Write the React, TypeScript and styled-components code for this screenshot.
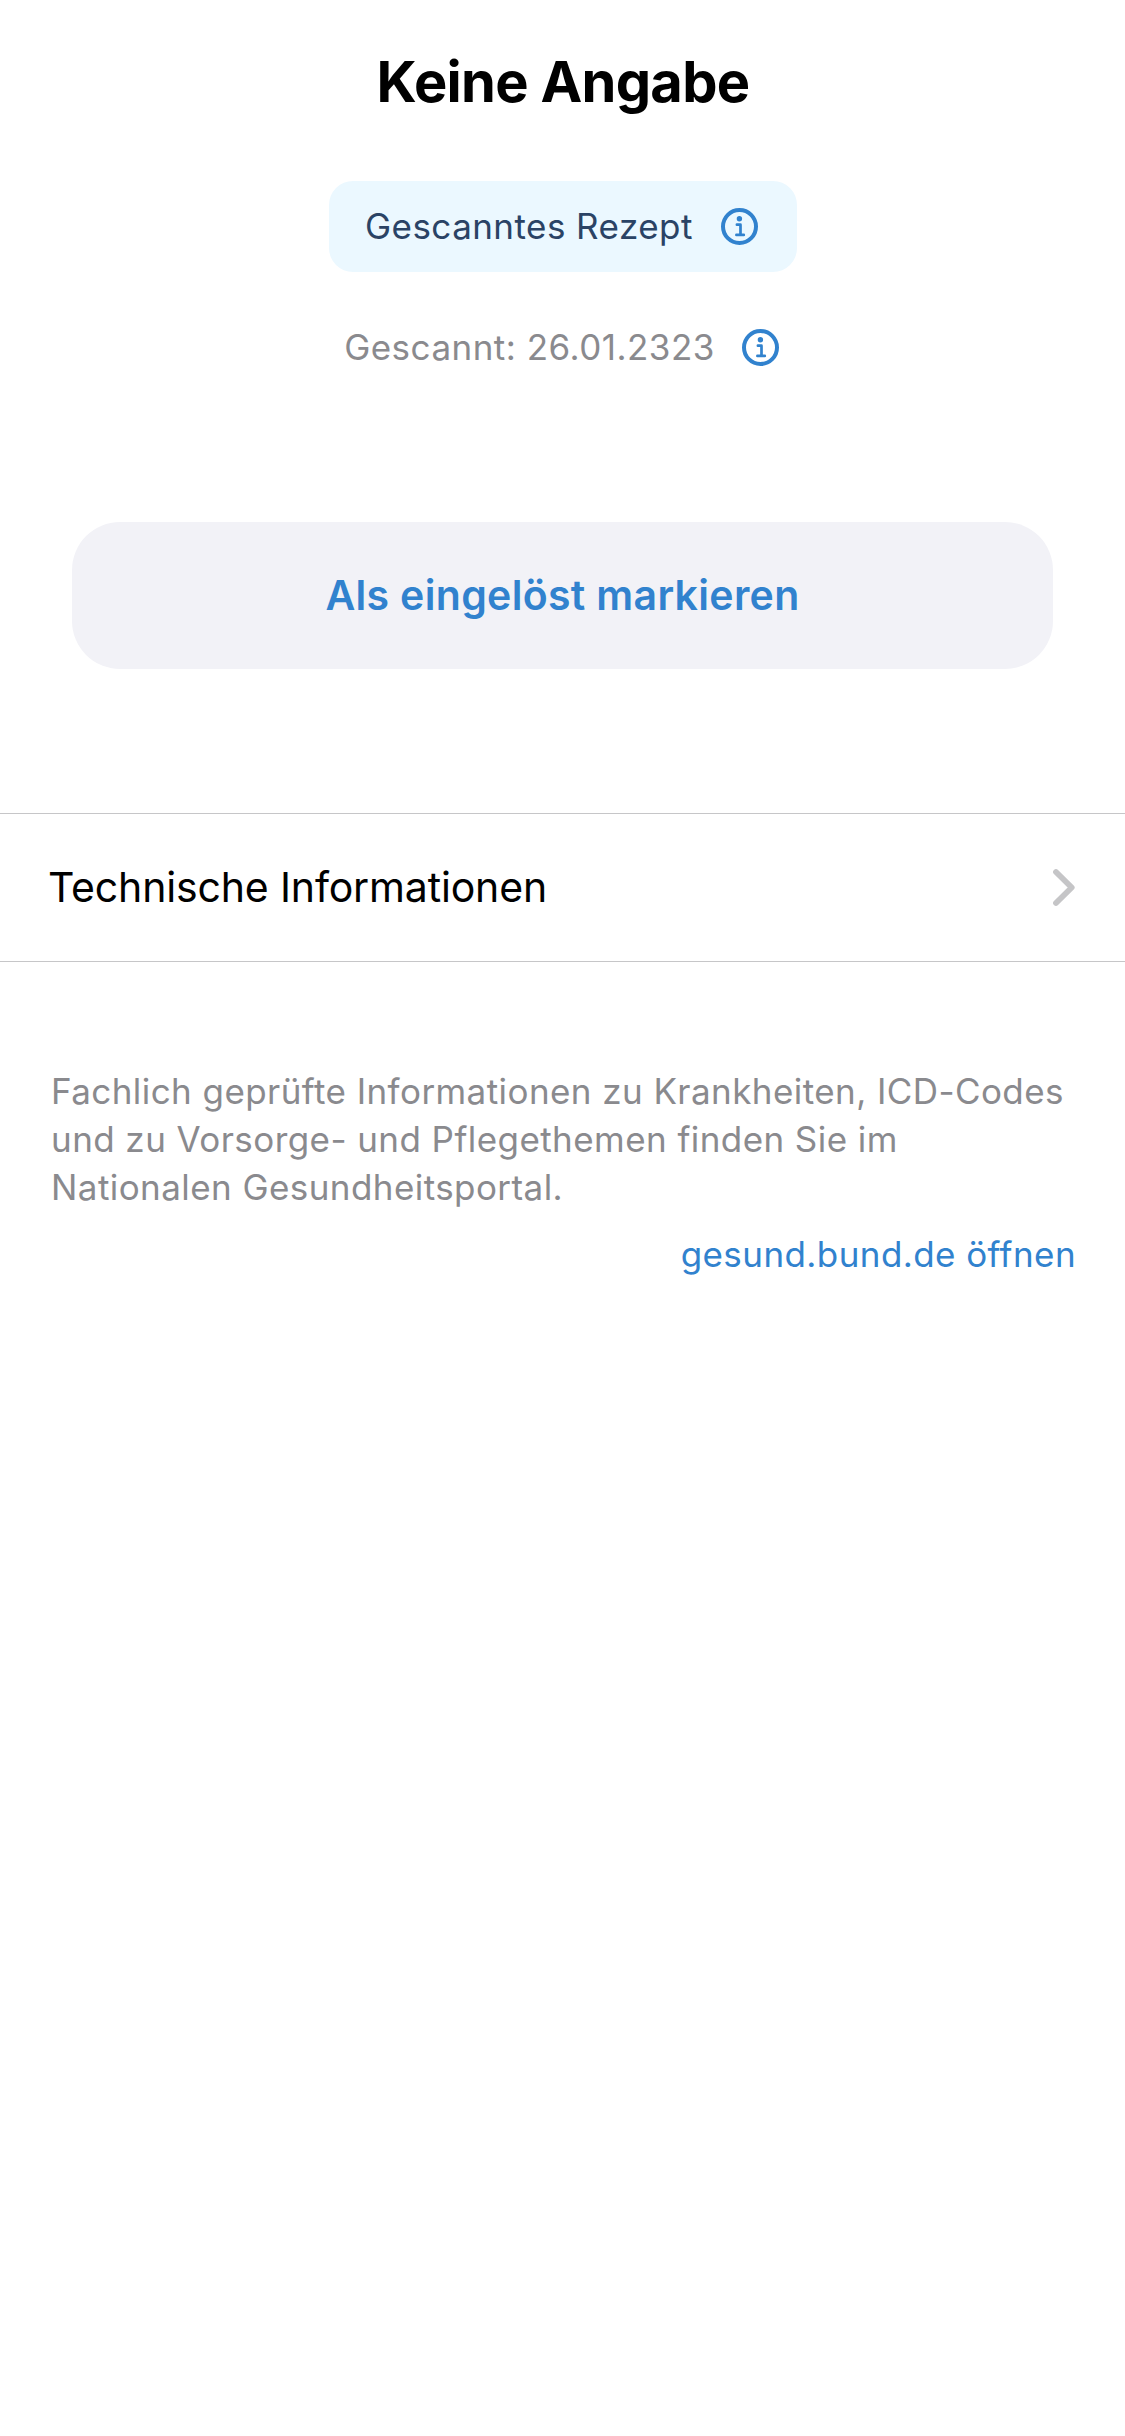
import React from 'react';
import styled, { createGlobalStyle } from 'styled-components';

const color = {
  background: '#ffffff',
  label: '#000000',
  secondary: '#8a8a8e',
  primary: '#3182ce',
  chipBackground: '#ebf8ff',
  chipText: '#2a4365',
  button: '#f2f2f7',
  separator: '#c6c6c8',
  chevron: '#c5c5c7',
};

const GlobalStyle = createGlobalStyle`
  body {
    margin: 0;
    background: ${color.background};
    font-family: Inter, 'Liberation Sans', sans-serif;
  }
  *, *::before, *::after { box-sizing: border-box; }
`;

const Screen = styled.main`
  display: flex;
  flex-direction: column;
  min-height: 2436px;
  background: ${color.background};
`;

const Header = styled.header`
  display: flex;
  flex-direction: column;
  align-items: center;
  padding: 48px 0 0 1px;
`;

const Title = styled.h1`
  margin: 0 0 65px;
  font-size: 56px;
  font-weight: 700;
  line-height: 68px;
  letter-spacing: -0.7px;
  color: ${color.label};
`;

const Chip = styled.button`
  display: flex;
  justify-content: space-between;
  align-items: flex-start;
  width: 468px;
  height: 91px;
  margin: 0 0 54px;
  padding: 24px 36px;
  border: 0;
  border-radius: 24px;
  background: ${color.chipBackground};
`;

const MetaRow = styled.div`
  display: flex;
  align-items: flex-start;
  gap: 24px;
`;

const Caption = styled.span<{ $color: string; $tracking: number }>`
  font-family: Inter, 'Liberation Sans', sans-serif;
  font-size: 35px;
  line-height: 42px;
  white-space: nowrap;
  letter-spacing: ${(p) => p.$tracking}px;
  color: ${(p) => p.$color};
`;

const Icon = styled.svg`
  display: block;
  flex: none;
  fill: none;
  stroke-linecap: round;
  stroke-linejoin: round;
`;

const PrimaryAction = styled.button`
  display: flex;
  justify-content: center;
  align-items: flex-start;
  height: 147px;
  margin: 153px 72px 0;
  padding: 48px 0 0;
  border: 0;
  border-radius: 48px;
  background: ${color.button};
  color: ${color.primary};
  font-family: inherit;
  font-size: 41px;
  font-weight: 600;
  line-height: 50px;
  letter-spacing: 0.32px;
`;

const ListRow = styled.a`
  display: flex;
  justify-content: space-between;
  height: 149px;
  margin-top: 144px;
  padding: 48px 49px 0 48px;
  border-top: 1px solid ${color.separator};
  border-bottom: 1px solid ${color.separator};
  color: ${color.label};
  font-size: 41px;
  line-height: 50px;
  letter-spacing: -0.16px;
`;

const Footer = styled.footer`
  display: flex;
  flex-direction: column;
  gap: 22px;
  padding: 105px 49px 0 51px;
`;

const Note = styled.p`
  margin: 0;
  font-size: 35px;
  line-height: 48px;
  letter-spacing: 0.43px;
  color: ${color.secondary};
`;

const PortalLink = styled.a`
  align-self: flex-end;
  font-size: 35px;
  line-height: 42px;
  letter-spacing: 0.42px;
  color: ${color.primary};
`;

function InfoIcon() {
  return (
    <Icon width="43" height="43" viewBox="0 0 43 43" stroke={color.primary} aria-hidden="true">
      <circle cx="21.5" cy="21.5" r="16.5" strokeWidth="4" />
      <circle cx="21.4" cy="13.7" r="2.7" fill={color.primary} stroke="none" />
      <path d="M18.9 19.7h3.6v10.2M18.4 29.9h7.4" strokeWidth="2.7" />
    </Icon>
  );
}

function Chevron() {
  return (
    <Icon width="23" height="50" viewBox="0 0 23 50" stroke={color.chevron} aria-hidden="true">
      <path d="M3 10l15.7 15.5L3 41" strokeWidth="5.8" />
    </Icon>
  );
}

export default function App() {
  return (
    <>
      <GlobalStyle />
      <Screen>
        <Header>
          <Title>Keine Angabe</Title>
          <Chip>
            <Caption $color={color.chipText} $tracking={0.45}>Gescanntes Rezept</Caption>
            <InfoIcon />
          </Chip>
          <MetaRow>
            <Caption $color={color.secondary} $tracking={0.48}>Gescannt: 26.01.2323</Caption>
            <InfoIcon />
          </MetaRow>
        </Header>
        <PrimaryAction>Als eingelöst markieren</PrimaryAction>
        <ListRow>
          <span>Technische Informationen</span>
          <Chevron />
        </ListRow>
        <Footer>
          <Note>
            Fachlich geprüfte Informationen zu Krankheiten, ICD-Codes und zu Vorsorge- und
            Pflegethemen finden Sie im Nationalen Gesundheitsportal.
          </Note>
          <PortalLink>gesund.bund.de öffnen</PortalLink>
        </Footer>
      </Screen>
    </>
  );
}
